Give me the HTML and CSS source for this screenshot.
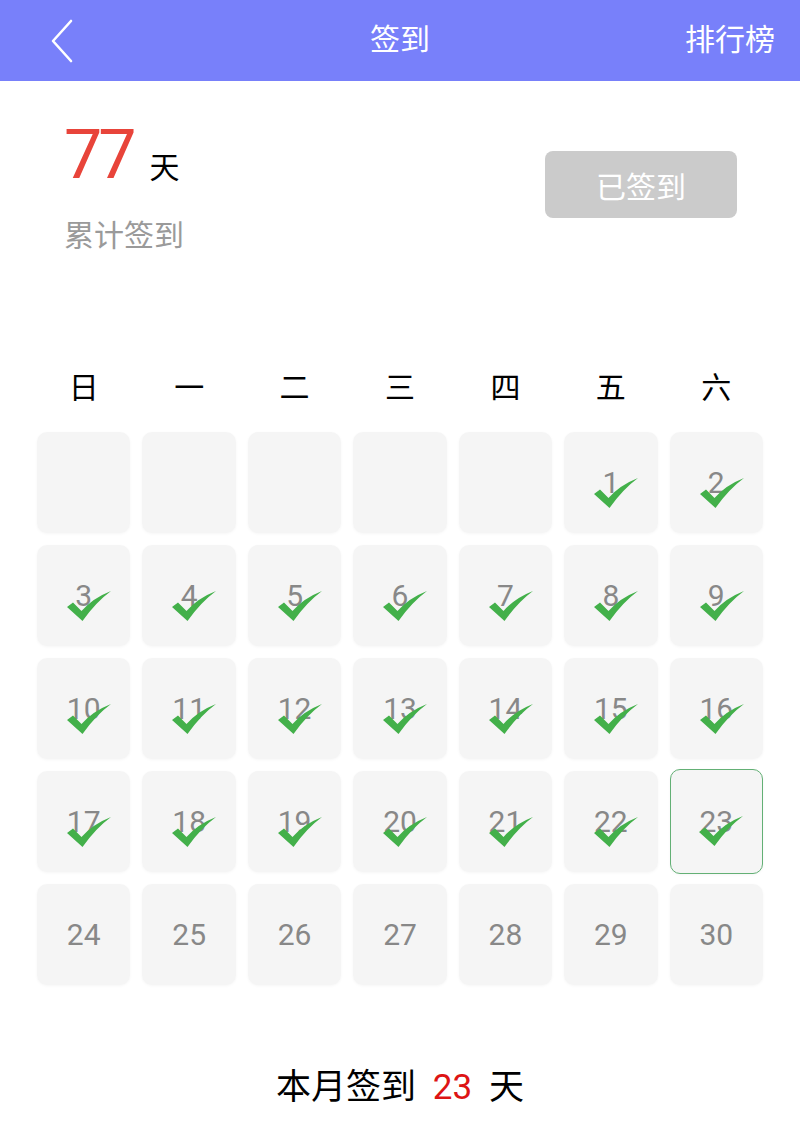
FILE: index.html
```html
<!DOCTYPE html>
<html lang="zh-CN">
<head>
    <meta charset="UTF-8">
    <meta name="viewport" content="width=device-width, initial-scale=1.0">
    <title>签到</title>
    <link rel="stylesheet" href="styles.css">
</head>
<body>

    <div class="top-bar">
        <span class="back-button">
            <svg width="24" height="44" viewBox="0 0 24 44">
                <polyline points="21,2 3,22 21,42" fill="none" stroke="#fff" stroke-width="2.6" stroke-linecap="round" stroke-linejoin="round"/>
            </svg>
        </span>
        <span class="top-title">签到</span>
        <span class="top-action">排行榜</span>
    </div>

    <div class="summary">
        <div class="summary-left">
            <div class="total-line">
                <span class="total-number">77</span>
                <span class="total-unit">天</span>
            </div>
            <div class="total-label">累计签到</div>
        </div>
        <button class="signed-button">已签到</button>
    </div>

    <div class="weekdays">
        <span>日</span>
        <span>一</span>
        <span>二</span>
        <span>三</span>
        <span>四</span>
        <span>五</span>
        <span>六</span>
    </div>

    <div id="calendar" class="calendar"></div>

    <div class="month-total">
        本月签到 <span class="month-count">23</span> 天
    </div>

    <script>
        const firstWeekday = 5;   // 1st of the month is a Friday
        const daysInMonth = 30;
        const today = 23;
        const checkSvg = '<svg class="check-mark" width="44" height="32" viewBox="0 0 44 32">' +
            '<path d="M0 17 L6 12.5 L14.5 21 Q26 8 44 1 Q29 12 15.5 31 Z" fill="#43b04a"/></svg>';

        const calendar = document.getElementById('calendar');

        for (let i = 0; i < firstWeekday; i++) {
            const blank = document.createElement('div');
            blank.className = 'day-cell';
            calendar.appendChild(blank);
        }

        for (let day = 1; day <= daysInMonth; day++) {
            const cell = document.createElement('div');
            cell.className = 'day-cell';
            if (day === today) {
                cell.classList.add('today');
            }

            const number = document.createElement('span');
            number.className = 'day-number';
            number.textContent = day;
            cell.appendChild(number);

            // days up to today are signed
            if (day <= today) {
                cell.insertAdjacentHTML('beforeend', checkSvg);
            }
            calendar.appendChild(cell);
        }
    </script>

</body>
</html>
```

FILE: styles.css
```css
body {
    margin: 0;
    font-family: Roboto, "Noto Sans CJK SC", sans-serif;
    background-color: #fff;
    color: #111;
}
.top-bar {
    height: 81px;
    background-color: #7880fa;
    display: grid;
    grid-template-columns: 1fr auto 1fr;
    align-items: center;
    color: #fff;
    font-size: 30px;
}
.back-button {
    padding-left: 50px;
    display: flex;
    align-items: center;
}
.top-title,
.top-action {
    padding-bottom: 8px;
}
.top-title {
    text-align: center;
}
.top-action {
    justify-self: end;
    padding-right: 25px;
}
.summary {
    display: flex;
    justify-content: space-between;
    align-items: flex-start;
    padding: 0 63px 0 64px;
}
.summary-left {
    padding-top: 40px;
}
.total-line {
    display: flex;
    align-items: baseline;
}
.total-number {
    font-size: 68px;
    line-height: 1;
    color: #e8443a;
    letter-spacing: -4px;
}
.total-unit {
    font-size: 30px;
    margin-left: 17px;
    color: #000;
}
.total-label {
    font-size: 30px;
    color: #9a9a9a;
    margin-top: 22px;
}
.signed-button {
    margin-top: 70px;
    width: 192px;
    height: 67px;
    background-color: #cbcbcb;
    border: none;
    border-radius: 8px;
    color: #fff;
    font-family: "Noto Sans CJK SC", sans-serif;
    font-size: 30px;
}
.weekdays {
    display: grid;
    grid-template-columns: repeat(7, 1fr);
    column-gap: 12px;
    padding: 0 37px;
    margin-top: 108px;
    font-family: "Noto Sans CJK SC", sans-serif;
    font-size: 30px;
    color: #000;
    text-align: center;
}
.calendar {
    display: grid;
    grid-template-columns: repeat(7, 1fr);
    grid-auto-rows: 101px;
    gap: 12px;
    padding: 0 37px;
    margin-top: 25px;
}
.day-cell {
    position: relative;
    background-color: #f5f5f5;
    border-radius: 10px;
    box-shadow: 0 1px 3px rgba(0, 0, 0, 0.04);
    display: flex;
    align-items: center;
    justify-content: center;
}
.day-cell.today {
    border: 1.5px solid #63b075;
    margin: -2px 0;
}
.day-number {
    font-size: 30px;
    color: #888;
}
.check-mark {
    position: absolute;
    left: 30px;
    top: 45px;
}
.today .check-mark {
    left: 28px;
    top: 45px;
}
.month-total {
    margin-top: 73px;
    text-align: center;
    font-family: "Noto Sans CJK SC", sans-serif;
    font-size: 35px;
    color: #000;
}
.month-count {
    font-family: Roboto, sans-serif;
    color: #dd1414;
    margin: 0 9px;
}
```
